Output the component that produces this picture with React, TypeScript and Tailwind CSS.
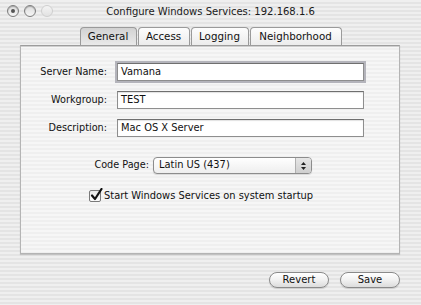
import { ReactNode } from "react";

const stripes =
  "bg-[repeating-linear-gradient(180deg,#efefef_0px,#efefef_2px,#e4e4e4_2px,#e4e4e4_4px)]";

function Light({ kind }: { kind: "close" | "min" | "zoom" }) {
  if (kind === "zoom") {
    return (
      <span className="w-[12px] h-[12px] rounded-full border border-[#cfcfcf] bg-gradient-to-b from-[#f4f4f4] to-[#e2e2e2]" />
    );
  }
  return (
    <span className="w-[12px] h-[12px] rounded-full border border-[#7d7d7d] bg-gradient-to-b from-[#dcdcdc] to-[#f6f6f6] flex items-center justify-center shadow-[inset_0_1px_1px_rgba(0,0,0,0.25)]">
      {kind === "close" && (
        <span className="w-[4px] h-[4px] rounded-full bg-[#555]" />
      )}
    </span>
  );
}

function Tab({ label, width, active }: { label: string; width: string; active?: boolean }) {
  return (
    <div
      className={`${width} h-[18px] flex items-center justify-center rounded-t-[4px] border border-b-0 border-[#9a9a9a] text-[10.3px] text-[#111] ${
        active
          ? "bg-gradient-to-b from-[#d2d2d2] to-[#e9e9e9]"
          : "bg-gradient-to-b from-[#fdfdfd] to-[#ececec]"
      }`}
    >
      {label}
    </div>
  );
}

function Field({ label, value, focused }: { label: string; value: string; focused?: boolean }) {
  return (
    <div className="flex items-center h-[18px]">
      <span className="w-[87px] text-right pr-[1px] text-[9.7px] text-[#111]">{label}</span>
      <div
        className={`ml-[9px] w-[247px] h-[18px] bg-white border border-[#8e8e8e] border-t-[#6f6f6f] flex items-center pl-[3px] text-[9.9px] text-[#111] ${
          focused ? "shadow-[0_0_0_2px_#b4b4bb]" : "shadow-[inset_0_1px_1px_rgba(0,0,0,0.12)]"
        }`}
      >
        {value}
      </div>
    </div>
  );
}

function PillButton({ children }: { children: ReactNode }) {
  return (
    <button className="w-[60px] h-[16px] rounded-full border border-[#8a8a8a] bg-gradient-to-b from-[#ffffff] via-[#f1f1f1] to-[#dcdcdc] text-[10px] text-[#111] flex items-center justify-center leading-none shadow-[0_1px_1px_rgba(0,0,0,0.15)]">
      {children}
    </button>
  );
}

export default function App() {
  return (
    <div
      className={`w-[421px] h-[305px] overflow-hidden ${stripes} font-['DejaVu_Sans',sans-serif] select-none`}
    >
      {/* Title bar */}
      <div className="h-[22px] grid grid-cols-[1fr_auto_1fr] items-center">
        <div className="flex items-center gap-[5px] pl-[7px]">
          <Light kind="close" />
          <Light kind="min" />
          <Light kind="zoom" />
        </div>
        <span className="text-[10px] text-[#1a1a1a]">
          Configure Windows Services: 192.168.1.6
        </span>
        <div />
      </div>

      <div className="px-[20px] pt-[5px]">
        {/* Tabs */}
        <div className="flex justify-center gap-[1px] relative z-10">
          <Tab label="General" width="w-[57px]" active />
          <Tab label="Access" width="w-[52px]" />
          <Tab label="Logging" width="w-[58px]" />
          <Tab label="Neighborhood" width="w-[92px]" />
        </div>

        {/* Panel */}
        <div className="w-[380px] h-[209px] border border-[#b4b4b4] border-t-[#9c9c9c] shadow-[inset_0_1px_0_#cfcfcf,0_1px_1px_rgba(0,0,0,0.15)] bg-[repeating-linear-gradient(180deg,#f6f6f6_0px,#f6f6f6_2px,#efefef_2px,#efefef_4px)] pt-[17px]">
          <div className="flex flex-col gap-[10px]">
            <Field label="Server Name:" value="Vamana" focused />
            <Field label="Workgroup:" value="TEST" />
            <Field label="Description:" value="Mac OS X Server" />
          </div>

          <div className="flex items-center mt-[20px] h-[17px]">
            <span className="w-[128px] text-right text-[9.7px] text-[#111]">Code Page:</span>
            <div className="ml-[4px] w-[159px] h-[17px] rounded-[4px] border border-[#8c8c8c] bg-gradient-to-b from-[#ffffff] to-[#eeeeee] flex items-center overflow-hidden shadow-[0_1px_1px_rgba(0,0,0,0.12)]">
              <span className="flex-1 pl-[5px] text-[9.9px] text-[#111]">Latin US (437)</span>
              <div className="w-[16px] h-full border-l border-[#b0b0b0] bg-gradient-to-b from-[#e6e6e6] to-[#cfcfcf] flex flex-col items-center justify-center gap-[2px]">
                <svg width="5" height="3" viewBox="0 0 5 3">
                  <path d="M2.5 0 L5 3 L0 3 Z" fill="#222" />
                </svg>
                <svg width="5" height="3" viewBox="0 0 5 3">
                  <path d="M0 0 L5 0 L2.5 3 Z" fill="#222" />
                </svg>
              </div>
            </div>
          </div>

          <div className="flex items-center mt-[15px] pl-[68px] gap-[3px]">
            <span className="w-[12px] h-[12px] border border-[#7a7a7a] rounded-[2px] bg-gradient-to-b from-[#e8e8e8] to-[#fbfbfb] relative">
              <svg className="absolute -top-[3px] left-[0px]" width="13" height="14" viewBox="0 0 13 14">
                <path d="M2 7.5 L5 11 L11.5 1" fill="none" stroke="#111" strokeWidth="2.2" strokeLinecap="round" strokeLinejoin="round" />
              </svg>
            </span>
            <span className="text-[9.9px] text-[#111]">Start Windows Services on system startup</span>
          </div>
        </div>

        {/* Buttons */}
        <div className="flex justify-end gap-[11px] mt-[18px] pr-[1px]">
          <PillButton>Revert</PillButton>
          <PillButton>Save</PillButton>
        </div>
      </div>
    </div>
  );
}
